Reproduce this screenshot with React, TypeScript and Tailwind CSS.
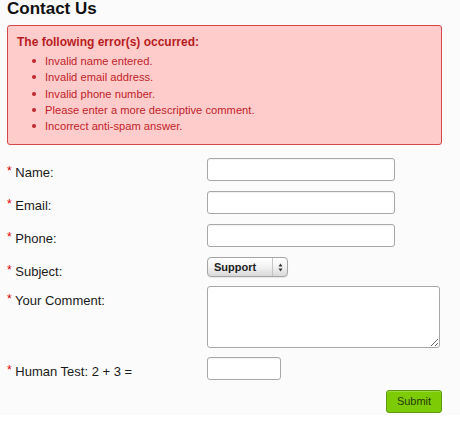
import React from 'react';

const errors = [
  'Invalid name entered.',
  'Invalid email address.',
  'Invalid phone number.',
  'Please enter a more descriptive comment.',
  'Incorrect anti-spam answer.',
];

function Label({ text }: { text: string }) {
  return (
    <div className="w-[200px] shrink-0 pt-[7px] text-[13px] leading-[16px] text-[#1a1a1a]">
      <span className="relative top-[-2px] text-[12px] text-[#e00000]">*</span> {text}
    </div>
  );
}

const inputCls =
  'block h-[23px] rounded-[3px] border border-[#a8a8a8] bg-white shadow-[inset_0_1px_1px_rgba(0,0,0,0.06)]';

export default function App() {
  return (
    <div className="min-h-[432px] bg-white" style={{ fontFamily: '"Liberation Sans", Arial, sans-serif' }}>
      <div className="bg-[#fbfbfb] pb-[2px] pl-[7px] pr-[18px]">
        <h1 className="-mt-[1px] text-[17px] font-bold leading-[20px] text-[#111]">Contact Us</h1>

        {/* Error box */}
        <div className="mt-[6px] w-[435px] rounded-[3px] border border-[#d4484a] bg-[#ffcccc] px-[9px] pb-[10px] pt-[8px]">
          <p className="text-[12px] font-bold leading-[16px] text-[#b81c22]">The following error(s) occurred:</p>
          <ul className="mt-[3px]">
            {errors.map((e) => (
              <li key={e} className="flex items-center text-[11.2px] leading-[16.3px] text-[#bf2329]">
                <span className="ml-[15px] mr-[9px] h-[4px] w-[4px] rounded-full bg-[#c0272d]" />
                {e}
              </li>
            ))}
          </ul>
        </div>

        {/* Form */}
        <div className="mt-[13px] w-[435px]">
          <div className="flex">
            <Label text="Name:" />
            <input className={`${inputCls} w-[188px]`} />
          </div>
          <div className="mt-[10px] flex">
            <Label text="Email:" />
            <input className={`${inputCls} h-[22px] w-[188px]`} />
          </div>
          <div className="mt-[10px] flex">
            <Label text="Phone:" />
            <input className={`${inputCls} w-[188px]`} />
          </div>
          <div className="mt-[10px] flex h-[20px]">
            <Label text="Subject:" />
            <div className="flex h-[20px] w-[81px] items-stretch rounded-[4px] border border-[#a5a5a5] bg-gradient-to-b from-white via-[#f2f2f2] to-[#d9d9d9] shadow-[0_1px_1px_rgba(0,0,0,0.08)]">
              <span className="flex-1 pl-[6px] text-[11px] font-bold leading-[18px] text-[#222]">Support</span>
              <span className="flex w-[15px] items-center justify-center border-l border-[#c4c4c4]">
                <svg width="5" height="9" viewBox="0 0 5 9">
                  <path d="M2.5 0.5 L4.5 3.5 L0.5 3.5 Z" fill="#333" />
                  <path d="M2.5 8.5 L4.5 5.5 L0.5 5.5 Z" fill="#333" />
                </svg>
              </span>
            </div>
          </div>
          <div className="mt-[9px] flex">
            <Label text="Your Comment:" />
            <textarea className="block h-[62px] w-[233px] rounded-[3px] border border-[#a8a8a8] bg-white" />
          </div>
          <div className="mt-[9px] flex">
            <Label text="Human Test: 2 + 3 =" />
            <input className={`${inputCls} w-[74px]`} />
          </div>
          <div className="mt-[10px] flex justify-end">
            <button className="h-[23px] w-[56px] rounded-[3px] border border-[#5e9a12] bg-[#7dcb05] text-[11px] leading-[21px] text-[#263d00] shadow-[inset_0_1px_0_rgba(255,255,255,0.25)]">
              Submit
            </button>
          </div>
        </div>
      </div>
    </div>
  );
}
